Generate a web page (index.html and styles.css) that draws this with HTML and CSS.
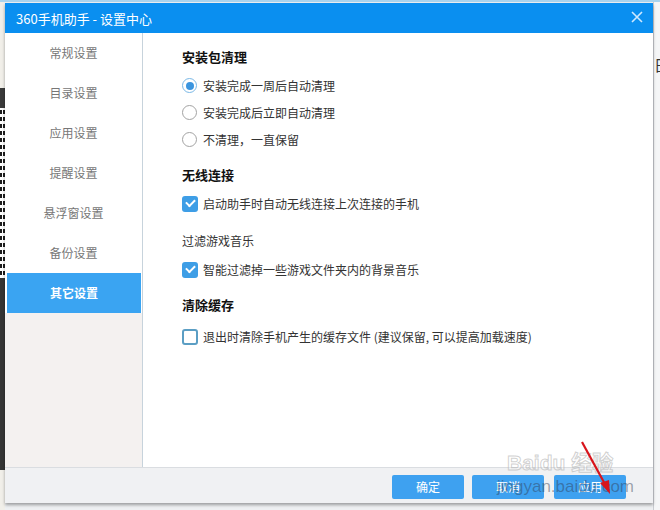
FILE: index.html
```html
<!DOCTYPE html>
<html lang="zh-CN">
<head>
    <meta charset="UTF-8">
    <title>360手机助手 - 设置中心</title>
    <link rel="stylesheet" href="styles.css">
</head>
<body>

    <div class="screen">
        <!-- sisa jendela di belakang (kiri) -->
        <div class="backdrop-left">
            <div class="dark-top"></div>
            <div class="qr"></div>
            <div class="dark"></div>
        </div>

        <div class="dialog">
            <div class="titlebar">
                <span class="title">360手机助手 - 设置中心</span>
                <svg class="close" width="12" height="12" viewBox="0 0 12 12">
                    <path d="M1 1 L11 11 M11 1 L1 11" stroke="#cfe9ff" stroke-width="1.6"/>
                </svg>
            </div>

            <div class="main">
                <div class="sidebar">
                    <div class="nav-item">常规设置</div>
                    <div class="nav-item">目录设置</div>
                    <div class="nav-item">应用设置</div>
                    <div class="nav-item">提醒设置</div>
                    <div class="nav-item">悬浮窗设置</div>
                    <div class="nav-item">备份设置</div>
                    <div class="nav-item active">其它设置</div>
                    <div class="nav-rest"></div>
                </div>

                <div class="content">
                    <div class="heading h-first">安装包清理</div>
                    <div class="option first">
                        <span class="radio checked"></span>安装完成一周后自动清理
                    </div>
                    <div class="option">
                        <span class="radio"></span>安装完成后立即自动清理
                    </div>
                    <div class="option">
                        <span class="radio"></span>不清理，一直保留
                    </div>

                    <div class="heading">无线连接</div>
                    <div class="option first">
                        <span class="check checked"></span>启动助手时自动无线连接上次连接的手机
                    </div>

                    <div class="heading plain">过滤游戏音乐</div>
                    <div class="option first">
                        <span class="check checked"></span>智能过滤掉一些游戏文件夹内的背景音乐
                    </div>

                    <div class="heading">清除缓存</div>
                    <div class="option first last">
                        <span class="check"></span>退出时清除手机产生的缓存文件 (建议保留, 可以提高加载速度)
                    </div>
                </div>
            </div>

            <div class="footer">
                <button class="btn">确定</button>
                <button class="btn">取消</button>
                <button class="btn">应用</button>
            </div>

            <!-- watermark + panah merah di atas tombol -->
            <div class="watermark">
                <span class="wm-logo">Baidu 经验</span>
                <span class="wm-url">jingyan.baidu.com</span>
            </div>
            <svg class="arrow" width="40" height="60" viewBox="0 0 40 60">
                <path d="M4 2 L28 46" stroke="#d8141c" stroke-width="2.2"/>
                <path d="M32 54 L22 43 L31 40 Z" fill="#d8141c"/>
            </svg>
        </div>

        <!-- sisa jendela di belakang (kanan) -->
        <div class="backdrop-right">
            <span class="peek">日</span>
        </div>
    </div>

</body>
</html>
```

FILE: styles.css
```css
body {
    margin: 0;
    padding: 0;
    background: #e8ebee;
    font-family: "Noto Sans CJK SC", "Liberation Sans", sans-serif;
    font-size: 12px;
    color: #333;
}

.screen {
    display: flex;
    width: 660px;
    height: 510px;
    overflow: hidden;
    background: #eef0f2;
    border-top: 2px solid #a9d3ee;
    box-sizing: border-box;
}

/* bagian belakang */
.backdrop-left {
    width: 5px;
    padding-top: 86px;
    background: #f1efe9;
}

.backdrop-left .dark-top {
    height: 20px;
    background: #3a3a3a;
}

.backdrop-left .qr {
    height: 170px;
    background-color: #1c1c1c;
    background-image:
        repeating-linear-gradient(0deg, #fff 0 3px, transparent 3px 7px),
        repeating-linear-gradient(90deg, transparent 0 2px, #fff 2px 3px);
}

.backdrop-left .dark {
    height: 192px;
    background: #353535;
}

.backdrop-right {
    width: 6px;
    border-left: 1px solid #c9ccd1;
    background: #f5f6f7;
    overflow: hidden;
}

.peek {
    display: block;
    margin-top: 52px;
    font-size: 15px;
    color: #333;
}

/* dialog */
.dialog {
    position: relative;
    width: 649px;
    height: 500px;
    margin-top: 1px;
    display: flex;
    flex-direction: column;
    background: #fff;
    box-shadow: 0 2px 3px rgba(0, 0, 0, 0.35);
}

.titlebar {
    height: 30px;
    background: #0a8ff0;
    display: flex;
    align-items: center;
    justify-content: space-between;
    padding: 0 10px 0 11px;
    flex-shrink: 0;
}

.title {
    color: #fff;
    font-size: 13px;
}

.close {
    margin-bottom: 2px;
}

.main {
    display: flex;
    flex: 1;
}

.sidebar {
    width: 137px;
    border-right: 1px solid #c7d3dc;
    display: flex;
    flex-direction: column;
}

.nav-item {
    height: 40px;
    line-height: 40px;
    text-align: center;
    color: #777;
    font-size: 12px;
}

.nav-item.active {
    background: #3aa4f2;
    color: #fff;
    font-weight: bold;
    margin-left: 2px;
    margin-right: 1px;
}

.nav-rest {
    flex: 1;
    background: #f4f1f0;
}

.content {
    flex: 1;
    padding-left: 39px;
}

.heading {
    font-size: 13px;
    font-weight: bold;
    color: #111;
    line-height: 18px;
    margin-top: 13px;
}

.heading.h-first {
    margin-top: 15px;
}

.heading.plain {
    font-weight: normal;
    font-size: 12px;
    color: #333;
    margin-top: 15px;
}

.option {
    height: 27px;
    display: flex;
    align-items: center;
    color: #333;
}

.option.first {
    margin-top: 6px;
}

.option.last {
    margin-top: 9px;
}

.radio {
    width: 13px;
    height: 13px;
    border: 1.5px solid #a3a3a3;
    border-radius: 50%;
    margin-right: 6px;
    flex-shrink: 0;
    box-sizing: content-box;
    position: relative;
}

.radio.checked {
    border-color: #7ab8e6;
}

.radio.checked::after {
    content: "";
    position: absolute;
    left: 2.5px;
    top: 2.5px;
    width: 8px;
    height: 8px;
    border-radius: 50%;
    background: #3b95df;
}

.check {
    width: 16px;
    height: 16px;
    border-radius: 3px;
    margin-right: 5px;
    flex-shrink: 0;
    box-sizing: border-box;
    border: 2px solid #5b9ec4;
    background: #fff;
    position: relative;
}

.check.checked {
    border: none;
    background: #3e9ee6;
}

.check.checked::after {
    content: "";
    position: absolute;
    left: 4px;
    top: 3px;
    width: 7px;
    height: 4px;
    border-left: 2px solid #fff;
    border-bottom: 2px solid #fff;
    transform: rotate(-45deg);
}

/* footer tombol */
.footer {
    height: 36px;
    flex-shrink: 0;
    background: #f0f1f3;
    border-top: 1px solid #dadde1;
    box-sizing: border-box;
    display: flex;
    align-items: center;
    justify-content: flex-end;
    gap: 8px;
    padding-right: 27px;
    padding-top: 2px;
}

.btn {
    width: 72px;
    height: 24px;
    border: none;
    border-radius: 2px;
    background: #3ea1f0;
    color: #fff;
    font-family: "Noto Sans CJK SC", sans-serif;
    font-size: 12px;
    padding: 0;
}

.btn:last-child {
    margin-left: 2px;
}

.watermark {
    position: absolute;
    left: 492px;
    top: 449px;
    display: flex;
    flex-direction: column;
    align-items: flex-start;
    pointer-events: none;
}

.wm-logo {
    font-family: "Liberation Sans", "Noto Sans CJK SC", sans-serif;
    font-size: 21px;
    font-weight: bold;
    color: rgba(255, 255, 255, 0.4);
    -webkit-text-stroke: 1px rgba(170, 170, 170, 0.55);
    line-height: 22px;
    margin-left: 10px;
}

.wm-url {
    font-family: "Liberation Sans", sans-serif;
    font-size: 17px;
    color: rgba(50, 60, 80, 0.45);
    line-height: 18px;
    margin-top: 4px;
}

.arrow {
    position: absolute;
    left: 573px;
    top: 437px;
}
```
